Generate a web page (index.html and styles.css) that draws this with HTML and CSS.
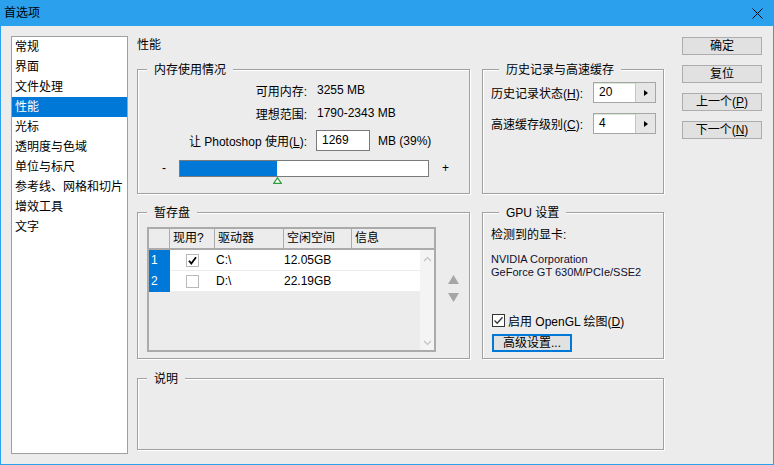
FILE: index.html
```html
<!DOCTYPE html>
<html lang="zh-CN">
<head>
    <meta charset="UTF-8">
    <title>首选项</title>
    <link rel="stylesheet" href="styles.css">
</head>
<body>
    <div class="window">
        <div class="titlebar">
            <span class="title">首选项</span>
            <svg class="close" width="11" height="11" viewBox="0 0 11 11">
                <path d="M0.5 0.5 L10.5 10.5 M10.5 0.5 L0.5 10.5" stroke="#000" stroke-width="1"/>
            </svg>
        </div>

        <div class="content">
            <!-- category list -->
            <ul class="nav">
                <li>常规</li>
                <li>界面</li>
                <li>文件处理</li>
                <li class="active">性能</li>
                <li>光标</li>
                <li>透明度与色域</li>
                <li>单位与标尺</li>
                <li>参考线、网格和切片</li>
                <li>增效工具</li>
                <li>文字</li>
            </ul>

            <div class="panel">
                <div class="panel-title">性能</div>
                <div class="panel-grid">

                    <div class="group memory">
                        <div class="group-title">内存使用情况</div>
                        <div class="mem-row">
                            <span class="mem-label">可用内存:</span>
                            <span class="mem-value">3255 MB</span>
                        </div>
                        <div class="mem-row gap3">
                            <span class="mem-label">理想范围:</span>
                            <span class="mem-value">1790-2343 MB</span>
                        </div>
                        <div class="mem-row mem-use">
                            <span class="mem-label">让 Photoshop 使用(<u>L</u>):</span>
                            <span class="text-input mem-input">1269</span>
                            <span class="mem-unit">MB (39%)</span>
                        </div>
                        <div class="slider">
                            <span class="slider-minus">-</span>
                            <div class="track">
                                <div class="fill" style="width: 39%"></div>
                                <svg class="thumb" style="left: 39%" width="9" height="7" viewBox="0 0 9 7">
                                    <polygon points="4.5,0.8 8.3,6.4 0.7,6.4" fill="#fff" stroke="#2f9e3f" stroke-width="1.2"/>
                                </svg>
                            </div>
                            <span class="slider-plus">+</span>
                        </div>
                    </div>

                    <div class="group history">
                        <div class="group-title">历史记录与高速缓存</div>
                        <div class="field-row">
                            <span class="field-label">历史记录状态(<u>H</u>):</span>
                            <div class="spin">
                                <span class="spin-value">20</span>
                                <span class="spin-btn"><svg width="4" height="6" viewBox="0 0 4 6"><polygon points="0,0 4,3 0,6" fill="#000"/></svg></span>
                            </div>
                        </div>
                        <div class="field-row second">
                            <span class="field-label">高速缓存级别(<u>C</u>):</span>
                            <div class="spin">
                                <span class="spin-value">4</span>
                                <span class="spin-btn"><svg width="4" height="6" viewBox="0 0 4 6"><polygon points="0,0 4,3 0,6" fill="#000"/></svg></span>
                            </div>
                        </div>
                    </div>

                    <div class="group scratch">
                        <div class="group-title">暂存盘</div>
                        <div class="scratch-body">
                            <div class="disk-table">
                                <div class="disk-head">
                                    <span></span>
                                    <span>现用?</span>
                                    <span>驱动器</span>
                                    <span>空闲空间</span>
                                    <span>信息</span>
                                </div>
                                <div class="disk-body">
                                    <div class="disk-rows">
                                        <div class="disk-row">
                                            <span class="disk-num">1</span>
                                            <span class="disk-check">
                                                <svg width="13" height="13" viewBox="0 0 13 13">
                                                    <rect x="0.5" y="0.5" width="12" height="12" fill="#fff" stroke="#b9b9b9"/>
                                                    <path d="M3 6.8 L5.3 9.6 L10 3.2" fill="none" stroke="#000" stroke-width="1.8"/>
                                                </svg>
                                            </span>
                                            <span class="disk-drive">C:\</span>
                                            <span>12.05GB</span>
                                            <span></span>
                                        </div>
                                        <div class="disk-row">
                                            <span class="disk-num">2</span>
                                            <span class="disk-check">
                                                <svg width="13" height="13" viewBox="0 0 13 13">
                                                    <rect x="0.5" y="0.5" width="12" height="12" fill="#fff" stroke="#b9b9b9"/>
                                                </svg>
                                            </span>
                                            <span class="disk-drive">D:\</span>
                                            <span>22.19GB</span>
                                            <span></span>
                                        </div>
                                    </div>
                                    <div class="scrollbar">
                                        <svg width="9" height="6" viewBox="0 0 9 6"><path d="M1 5 L4.5 1.5 L8 5" fill="none" stroke="#c2c2c2" stroke-width="1.2"/></svg>
                                        <svg width="9" height="6" viewBox="0 0 9 6"><path d="M1 1 L4.5 4.5 L8 1" fill="none" stroke="#c2c2c2" stroke-width="1.2"/></svg>
                                    </div>
                                </div>
                            </div>
                            <div class="order-arrows">
                                <svg width="11" height="9" viewBox="0 0 11 9"><polygon points="5.5,0 11,9 0,9" fill="#a6a6a6"/></svg>
                                <svg width="11" height="9" viewBox="0 0 11 9"><polygon points="0,0 11,0 5.5,9" fill="#a6a6a6"/></svg>
                            </div>
                        </div>
                    </div>

                    <div class="group gpu">
                        <div class="group-title">GPU 设置</div>
                        <div class="gpu-label">检测到的显卡:</div>
                        <div class="gpu-info">NVIDIA Corporation<br>GeForce GT 630M/PCIe/SSE2</div>
                        <div class="gpu-check">
                            <svg width="13" height="13" viewBox="0 0 13 13">
                                <rect x="0.5" y="0.5" width="12" height="12" fill="#fff" stroke="#333"/>
                                <path d="M2.5 6.5 L5.2 9.2 L10.5 3.2" fill="none" stroke="#333" stroke-width="1.3"/>
                            </svg>
                            <span>启用 OpenGL 绘图(<u>D</u>)</span>
                        </div>
                        <button class="btn gpu-btn">高级设置...</button>
                    </div>

                    <div class="group desc">
                        <div class="group-title">说明</div>
                    </div>

                </div>
            </div>

            <div class="actions">
                <button class="btn">确定</button>
                <button class="btn">复位</button>
                <button class="btn">上一个(<u>P</u>)</button>
                <button class="btn">下一个(<u>N</u>)</button>
            </div>
        </div>
    </div>
</body>
</html>
```

FILE: styles.css
```css
body { margin: 0; background: #fff; font-family: "Liberation Sans", "Noto Sans CJK SC", sans-serif; font-size: 12px; color: #000; }
u { text-decoration: underline; text-underline-offset: 1px; }

.window { width: 774px; height: 465px; box-sizing: border-box; border: 1px solid #2ba1ee; border-top: 0; background: #ececec; overflow: hidden; }
.titlebar { height: 26px; background: #2ba1ee; display: flex; align-items: center; justify-content: space-between; padding: 0 10px 0 3px; }
.title { line-height: 16px; }
.close { display: block; }

.content { display: flex; align-items: flex-start; padding: 10px 0 0 10px; }

/* category list */
.nav { list-style: none; margin: 0; padding: 0; width: 117px; height: 418px; box-sizing: border-box; border: 1px solid #a0a0a0; background: #fff; }
.nav li { height: 20px; line-height: 20px; padding-left: 3px; white-space: nowrap; }
.nav li.active { background: #0078d7; color: #fff; }

.panel { width: 527px; margin-left: 9px; }
.panel-title { height: 18px; line-height: 18px; }
.panel-grid { display: grid; grid-template-columns: 333px 182px; grid-template-rows: 125px 147px 73px; column-gap: 12px; row-gap: 18px; margin-top: 15px; }

/* etched group box; --pad is the space from the top border to the first row */
.group { border: 1px solid #a0a0a0; box-shadow: inset 1px 1px 0 #fff, 1px 1px 0 #fff; box-sizing: border-box; --pad: 0px; }
.group-title { width: fit-content; height: 16px; line-height: 16px; margin: -8px 0 calc(var(--pad) - 8px) 9px; padding: 0 7px; background: #ececec; white-space: nowrap; }

/* memory */
.memory { --pad: 10px; }
.mem-row { display: flex; align-items: center; height: 20px; }
.mem-row.gap3 { margin-top: 3px; }
.mem-label { width: 169px; text-align: right; white-space: nowrap; }
.mem-value { margin-left: 10px; }
.mem-use { height: 21px; margin-top: 7px; }
.text-input { display: block; box-sizing: border-box; background: #fff; border: 1px solid #7a7a7a; height: 21px; line-height: 19px; padding-left: 5px; }
.mem-input { width: 54px; margin-left: 9px; }
.mem-unit { margin-left: 8px; }

.slider { display: flex; align-items: center; height: 17px; margin: 9px 0 0 24px; }
.slider-minus { width: 17px; line-height: 17px; }
.track { width: 250px; height: 17px; box-sizing: border-box; border: 1px solid #7a7a7a; background: #fff; position: relative; }
.fill { height: 100%; background: #0078d7; }
.thumb { position: absolute; top: 16px; margin-left: -4px; display: block; }
.slider-plus { margin-left: 13px; line-height: 17px; }

/* history */
.history { --pad: 12px; padding-left: 8px; }
.history .group-title { margin-left: 8px; }
.field-row { display: flex; align-items: center; height: 21px; }
.field-row.second { margin-top: 10px; }
.field-label { width: 102px; white-space: nowrap; }
.spin { display: flex; width: 63px; height: 21px; box-sizing: border-box; border: 1px solid #a6a6a6; background: #fff; box-shadow: inset 0 1px 0 #d6ead6; }
.spin-value { flex: 1; line-height: 19px; padding-left: 5px; }
.spin-btn { width: 19px; background: #e6e6e6; border-left: 1px solid #c6c6c6; display: flex; align-items: center; justify-content: center; }

/* scratch disks */
.scratch { --pad: 14px; padding-left: 9px; }
.scratch .group-title { margin-left: 0; }
.scratch-body { display: flex; align-items: flex-start; }
.disk-table { width: 289px; height: 125px; box-sizing: border-box; border: 2px solid #ababab; display: flex; flex-direction: column; }
.disk-head, .disk-row { display: grid; grid-template-columns: 21px 45px 69px 68px 1fr; }
.disk-head { height: 21px; box-sizing: border-box; border-bottom: 2px solid #ababab; }
.disk-head span { border-right: 1px solid #ababab; line-height: 19px; padding-left: 3px; white-space: nowrap; }
.disk-head span:last-child { border-right: 0; }
.disk-body { flex: 1; display: flex; }
.disk-rows { flex: 1; }
.disk-row { height: 21px; box-sizing: border-box; background: #fff; border-bottom: 1px solid #ececec; align-items: center; }
.disk-row span { line-height: 20px; }
.disk-num { background: #0078d7; color: #fff; padding-left: 2px; height: 21px; margin-bottom: -1px; }
.disk-check { display: flex; padding-left: 16px; }
.disk-check svg { display: block; }
.disk-drive { padding-left: 1px; }
.scrollbar { width: 14px; background: #f4f4f4; display: flex; flex-direction: column; justify-content: space-between; align-items: center; padding: 6px 0 4px; box-sizing: border-box; }
.order-arrows { display: flex; flex-direction: column; gap: 9px; margin: 48px 0 0 12px; }
.order-arrows svg { display: block; }

/* gpu */
.gpu { --pad: 14px; padding-left: 8px; }
.gpu .group-title { margin-left: 8px; }
.gpu-label { line-height: 16px; }
.gpu-info { margin-top: 10px; font-size: 11px; line-height: 13px; color: #101030; }
.gpu-check { display: flex; align-items: center; height: 16px; margin: 33px 0 0 1px; }
.gpu-check svg { display: block; }
.gpu-check span { margin-left: 3px; }

.btn { display: block; width: 80px; height: 18px; box-sizing: border-box; padding: 0; border: 1px solid #adadad; background: #e1e1e1; font-family: inherit; font-size: 12px; color: #000; line-height: 16px; }
.gpu-btn { margin: 6px 0 0 1px; border: 2px solid #0078d7; line-height: 14px; }

.desc { margin-top: 1px; grid-column: 1 / 3; }

/* dialog buttons */
.actions { width: 80px; margin-left: 18px; padding-top: 1px; display: flex; flex-direction: column; gap: 10px; }
```
